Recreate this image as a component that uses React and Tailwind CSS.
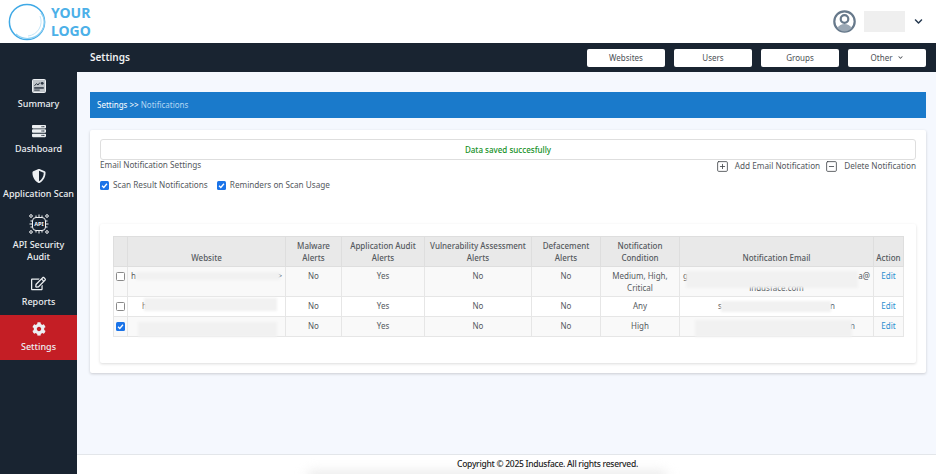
import { SquareMinus, SquarePlus } from "lucide-react";
import { FaChevronDown, FaCog, FaRegEdit, FaServer, FaShieldAlt } from "react-icons/fa";

const rows = [
    { checked: false, condition: ["Medium, High,", "Critical"], tall: true },
    { checked: false, condition: ["Any"] },
    { checked: true, condition: ["High"] },
];

const columns = [
    { label: ["Website"], width: "w-[158px]" },
    { label: ["Malware", "Alerts"], width: "w-[56px]" },
    { label: ["Application Audit", "Alerts"], width: "w-[83px]" },
    { label: ["Vulnerability Assessment", "Alerts"], width: "w-[107px]" },
    { label: ["Defacement", "Alerts"], width: "w-[69px]" },
    { label: ["Notification", "Condition"], width: "w-[79px]" },
    { label: ["Notification Email"], width: "w-[194px]" },
    { label: ["Action"], width: "w-[30px]" },
];

function SummaryIcon() {
    return (
        <svg width="14" height="14" viewBox="0 0 14 14" fill="none">
            <rect x="0.5" y="0.5" width="13" height="13" rx="1" fill="#bfc4c9" stroke="#eceff2" strokeWidth="1" />
            <path d="M2.5 6.8l2-2.2 1.5 1.4 1.8-2.4" stroke="#2b3542" strokeWidth="1" />
            <circle cx="10.2" cy="4.3" r="1.4" fill="#2b3542" />
            <rect x="2.2" y="8.2" width="9.6" height="1.5" fill="#2b3542" />
            <rect x="2.2" y="10.6" width="5.5" height="1" fill="#2b3542" />
        </svg>
    );
}

function ApiIcon() {
    return (
        <svg width="22" height="22" viewBox="0 0 22 22" fill="none" stroke="#f3f4f6" strokeWidth="1">
            <rect x="4.5" y="4.5" width="13" height="13" rx="3.5" />
            <text x="11" y="13" textAnchor="middle" fontSize="5.6" fontWeight="700" fill="#f3f4f6" stroke="none" fontFamily="'Noto Sans', sans-serif">
                API
            </text>
            <path d="M8 4.5V2.5M11 4.5V1.5M14 4.5V2.5M8 17.5V19.5M11 17.5V20.5M14 17.5V19.5M4.5 8H2.5M4.5 11H1.5M4.5 14H2.5M17.5 8H19.5M17.5 11H20.5M17.5 14H19.5" />
            <circle cx="3" cy="3" r="1.3" />
            <circle cx="19" cy="3" r="1.3" />
            <circle cx="3" cy="19" r="1.3" />
            <circle cx="19" cy="19" r="1.3" />
        </svg>
    );
}

function UserIcon() {
    return (
        <svg width="23" height="23" viewBox="0 0 23 23" fill="none">
            <circle cx="11.5" cy="11.5" r="10.2" fill="white" stroke="#67798b" strokeWidth="2.2" />
            <circle cx="11.5" cy="9" r="3.8" stroke="#67798b" strokeWidth="2.2" />
            <path d="M4.5 18.2c1.5-3.2 4-4.2 7-4.2s5.5 1 7 4.2c-1.8 2-4.2 3.2-7 3.2s-5.2-1.2-7-3.2z" fill="#9aa7b4" />
        </svg>
    );
}

function Logo() {
    return (
        <div className="flex items-center gap-[5px] pl-[8px]">
            <svg width="38" height="38" viewBox="0 0 38 38" fill="none">
                <circle cx="19" cy="19" r="17.6" stroke="#3fa9e6" strokeWidth="1.5" />
                <path d="M8 31a17 17 0 0 0 24-1A15 15 0 0 0 33 10" stroke="#8fd0f2" strokeWidth="1.2" />
                <path d="M20 33a14.5 14.5 0 0 0 12-20" stroke="#b5e0f6" strokeWidth="0.8" />
            </svg>
            <div className="text-[14px] font-bold leading-[18px] text-[#4cb0e8]">
                <div>YOUR</div>
                <div>LOGO</div>
            </div>
        </div>
    );
}

function Checkbox({ checked }) {
    if (checked) {
        return (
            <span className="flex h-[9px] w-[9px] items-center justify-center rounded-[1.5px] bg-[#1a73e8]">
                <svg width="7" height="7" viewBox="0 0 8 8" fill="none">
                    <path d="M1.2 4.2l2 2 3.6-4.2" stroke="white" strokeWidth="1.5" />
                </svg>
            </span>
        );
    }
    return <span className="block h-[9px] w-[9px] rounded-[1.5px] border border-[#8a8a8a] bg-white" />;
}

function SideItem({ icon, label, active, tall }) {
    return (
        <div
            className={`flex flex-col items-center text-center text-[9px] font-medium leading-[12px] text-[#eceff2] ${tall ? "h-[63px] pt-[7px]" : "h-[45px] pt-[4px]"} ${active ? "bg-[#c41e25]" : ""}`}
        >
            <div className="flex h-[19px] items-center justify-center">{icon}</div>
            <div className={tall ? "mt-[6px]" : "mt-[3px]"}>{label}</div>
        </div>
    );
}

function TopButton({ children }) {
    return (
        <button className="flex h-[18px] w-[78px] items-center justify-center gap-[6px] rounded-[2px] bg-white text-[8px] text-[#4b4f55]">
            {children}
        </button>
    );
}

// greyed out patch over private values
function Blur({ className }) {
    return <div className={`absolute bg-[#f1f1f1] blur-[1px] ${className}`} />;
}

export default function App() {
    return (
        <div className="flex h-[474px] w-[936px] flex-col overflow-hidden bg-white font-['Noto_Sans',sans-serif]">
            <div className="flex h-[43px] shrink-0 items-center justify-between bg-white">
                <Logo />
                <div className="flex items-center pr-[13px]">
                    <UserIcon />
                    <div className="ml-[8px] h-[21px] w-[41px] bg-[#efefef]" />
                    <FaChevronDown className="ml-[9px] text-[9px] text-[#24384f]" />
                </div>
            </div>

            <div className="flex h-[29px] shrink-0 items-center justify-between bg-[#192431] pl-[90px] pr-[10px]">
                <div className="text-[10px] font-semibold text-[#eef0f2]">Settings</div>
                <div className="flex gap-[9px]">
                    <TopButton>Websites</TopButton>
                    <TopButton>Users</TopButton>
                    <TopButton>Groups</TopButton>
                    <TopButton>
                        Other <FaChevronDown className="text-[5px]" />
                    </TopButton>
                </div>
            </div>

            <div className="flex min-h-0 flex-1">
                <aside className="w-[77px] shrink-0 bg-[#192431]">
                    <SideItem icon={<SummaryIcon />} label="Summary" />
                    <SideItem icon={<FaServer className="text-[14px]" />} label="Dashboard" />
                    <SideItem icon={<FaShieldAlt className="text-[14px]" />} label="Application Scan" />
                    <SideItem icon={<ApiIcon />} label={<>API Security<br />Audit</>} tall />
                    <SideItem icon={<FaRegEdit className="text-[15px]" />} label="Reports" />
                    <SideItem icon={<FaCog className="text-[14px]" />} label="Settings" active />
                </aside>

                <main className="flex min-w-0 flex-1 flex-col bg-[#f5f8fe]">
                    <div className="flex-1 pl-[13px] pr-[10px] pt-[20px]">
                        <div className="flex h-[26px] items-center bg-[#1a7acb] px-[7px] text-[8px] text-white">
                            Settings &gt;&gt;&nbsp;<span className="text-[#b4d7f3]">Notifications</span>
                        </div>

                        <div className="mt-[12px] h-[243px] rounded-[2px] bg-white px-[10px] pt-[9px] shadow-[0_1px_3px_rgba(0,0,0,0.18)]">
                            <div className="flex h-[21px] items-center justify-center rounded-[3px] border border-[#dedede] text-[8px] font-medium text-[#15911f]">
                                Data saved succesfully
                            </div>

                            <div className="flex items-start justify-between text-[8.2px] text-[#55595e]">
                                <div className="mt-[-1px]">
                                    <div className="leading-[12px]">Email Notification Settings</div>
                                    <div className="mt-[8px] flex items-center">
                                        <Checkbox checked />
                                        <span className="ml-[4px] leading-[12px]">Scan Result Notifications</span>
                                        <span className="ml-[9px]"><Checkbox checked /></span>
                                        <span className="ml-[4px] leading-[12px]">Reminders on Scan Usage</span>
                                    </div>
                                </div>
                                <div className="flex items-center">
                                    <SquarePlus size={13} strokeWidth={1.5} color="#3f4347" />
                                    <span className="ml-[6px]">Add Email Notification</span>
                                    <SquareMinus size={13} strokeWidth={1.5} color="#3f4347" className="ml-[5px]" />
                                    <span className="ml-[6px]">Delete Notification</span>
                                </div>
                            </div>

                            <div className="mt-[33px] h-[139px] rounded-[2px] bg-white px-[13px] pt-[12px] shadow-[0_1px_3px_rgba(0,0,0,0.14)]">
                                <table className="w-[790px] table-fixed border-collapse text-center text-[8px] leading-[12px] text-[#55595e]">
                                    <thead>
                                        <tr className="h-[30px] bg-[#e9e9e9]">
                                            <th className="w-[14px] border border-[#dedede]" />
                                            {columns.map((col) => (
                                                <th
                                                    key={col.label[0]}
                                                    className={`${col.width} whitespace-nowrap border border-[#dedede] px-0 align-bottom pb-[2px] font-medium`}
                                                >
                                                    {col.label.map((line) => (
                                                        <div key={line}>{line}</div>
                                                    ))}
                                                </th>
                                            ))}
                                        </tr>
                                    </thead>
                                    <tbody>
                                        {rows.map((row, index) => (
                                            <tr
                                                key={index}
                                                className={`${row.tall ? "h-[30px]" : "h-[20px]"} ${index % 2 === 0 ? "bg-[#f9f9f9]" : "bg-white"}`}
                                            >
                                                <td className="border border-[#e6e6e6] align-top pt-[5px]">
                                                    <div className="flex justify-center">
                                                        <Checkbox checked={row.checked} />
                                                    </div>
                                                </td>
                                                <td className="relative border border-[#e6e6e6] align-top pt-[3px]">
                                                    {index === 0 && (
                                                        <div className="flex justify-between px-[3px]">
                                                            <span>h</span>
                                                            <span>&gt;</span>
                                                        </div>
                                                    )}
                                                    {index === 1 && <div className="pl-[14px] text-left">h</div>}
                                                    {index === 0 && <Blur className="left-[8px] right-[5px] top-[5px] h-[8px]" />}
                                                    {index === 1 && <Blur className="left-[16px] right-[8px] top-[1px] h-[13px]" />}
                                                    {index === 2 && <Blur className="left-[10px] right-[8px] top-[5px] h-[15px]" />}
                                                </td>
                                                <td className="border border-[#e6e6e6] align-top pt-[3px]">No</td>
                                                <td className="border border-[#e6e6e6] align-top pt-[3px]">Yes</td>
                                                <td className="border border-[#e6e6e6] align-top pt-[3px]">No</td>
                                                <td className="border border-[#e6e6e6] align-top pt-[3px]">No</td>
                                                <td className="border border-[#e6e6e6] align-top pt-[3px] whitespace-nowrap">
                                                    {row.condition.map((line) => (
                                                        <div key={line}>{line}</div>
                                                    ))}
                                                </td>
                                                <td className="relative border border-[#e6e6e6] align-top pt-[3px]">
                                                    {index === 0 && (
                                                        <>
                                                            <div className="flex justify-between px-[3px]">
                                                                <span>g</span>
                                                                <span>a@</span>
                                                            </div>
                                                            <div>indusface.com</div>
                                                        </>
                                                    )}
                                                    {index === 1 && (
                                                        <div className="flex justify-between px-[38px]">
                                                            <span>s</span>
                                                            <span>n</span>
                                                        </div>
                                                    )}
                                                    {index === 2 && <div className="pr-[18px] text-right">n</div>}
                                                    {index === 0 && <Blur className="left-[6px] right-[15px] top-[4px] h-[17px]" />}
                                                    {index === 1 && <Blur className="left-[41px] right-[42px] top-[4px] h-[11px]" />}
                                                    {index === 2 && <Blur className="left-[15px] right-[21px] top-[3px] h-[17px]" />}
                                                </td>
                                                <td className="border border-[#e6e6e6] align-top pt-[3px] text-[#2a8fd0]">Edit</td>
                                            </tr>
                                        ))}
                                    </tbody>
                                </table>
                            </div>
                        </div>
                    </div>

                    <footer className="relative flex h-[20px] shrink-0 items-center justify-center overflow-hidden border-t border-[#e3e6ea] bg-white pl-[82px] text-[8.5px] font-medium tracking-[-0.27px] text-[#222]">
                        <div className="absolute bottom-[-6px] left-[230px] h-[8px] w-[360px] rounded-full bg-[#e4e4e4] blur-[6px]" />
                        <span className="relative">Copyright © 2025 Indusface. All rights reserved.</span>
                    </footer>
                </main>
            </div>
        </div>
    );
}
